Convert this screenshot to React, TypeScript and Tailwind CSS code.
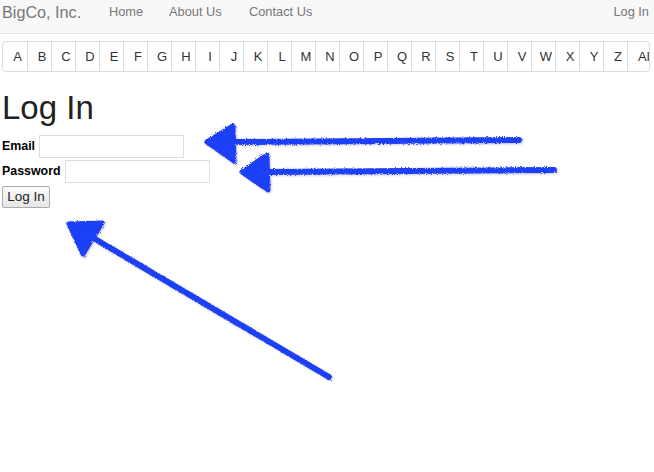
import React from "react";

const letters = "ABCDEFGHIJKLMNOPQRSTUVWXYZ".split("").concat("All");

function Arrows() {
  return (
    <svg
      className="pointer-events-none absolute left-0 top-0"
      width="654"
      height="472"
      viewBox="0 0 654 472"
    >
      <defs>
        <filter id="chalk" x="-10%" y="-10%" width="120%" height="120%">
          <feTurbulence type="fractalNoise" baseFrequency="1.1" numOctaves="2" result="noise" />
          <feDisplacementMap in="SourceGraphic" in2="noise" scale="3.5" result="rough" />
          <feGaussianBlur in="rough" stdDeviation="1.3" result="blur" />
          <feOffset in="blur" dx="0.5" dy="1" result="shadow" />
          <feColorMatrix
            in="shadow"
            type="matrix"
            values="0 0 0 0 0.2  0 0 0 0 0.2  0 0 0 0 0.3  0 0 0 0.4 0"
            result="shade"
          />
          <feMerge>
            <feMergeNode in="shade" />
            <feMergeNode in="rough" />
          </feMerge>
        </filter>
      </defs>
      <g filter="url(#chalk)" fill="#1e3ff6" stroke="#1e3ff6" strokeLinecap="round" strokeLinejoin="round">
        {/* email arrow */}
        <path d="M232 142 L519 140" strokeWidth="6" fill="none" />
        <path d="M207 142 L233 126 L234 161 Z" strokeWidth="5" />
        {/* password arrow */}
        <path d="M264 172 L554 170" strokeWidth="6" fill="none" />
        <path d="M242 172 L267 155 L268 190 Z" strokeWidth="5" />
        {/* button arrow */}
        <path d="M95 239 L329 377" strokeWidth="6" fill="none" />
        <path d="M69 224 L102 223 L83 254 Z" strokeWidth="5" />
      </g>
    </svg>
  );
}

export default function App() {
  return (
    <div
      className="relative h-[472px] w-[654px] overflow-hidden bg-white text-[#333]"
      style={{ fontFamily: '"Liberation Sans", Arial, sans-serif' }}
    >
      <nav className="flex h-[34px] items-start border-b border-[#e7e7e7] bg-[#f8f8f8] pl-[2px] pr-[5px] pt-[2px] text-[12.8px] text-[#777]">
        <span className="w-[107px] text-[16.2px] leading-[20px]">BigCo, Inc.</span>
        <span className="w-[60px] leading-[20px]">Home</span>
        <span className="w-[80px] leading-[20px]">About Us</span>
        <span className="leading-[20px]">Contact Us</span>
        <span className="ml-auto leading-[20px]">Log In</span>
      </nav>

      <div className="ml-[2px] mt-[7px] flex w-[648px] overflow-hidden rounded-[4px] border border-[#ddd]">
        {letters.map((l, i) => (
          <span
            key={l}
            className={`flex h-[29px] w-[24px] shrink-0 items-center overflow-hidden whitespace-nowrap text-[13px] text-[#333] ${
              i > 0 ? "border-l border-[#ddd]" : ""
            } ${l === "All" ? "justify-start pl-[10px]" : "justify-center pl-[5px]"}`}
          >
            {l}
          </span>
        ))}
      </div>

      <div className="px-[2px]">
        <h1 className="mt-[18px] text-[33px] leading-[36px] text-[#222]">Log In</h1>
        <form className="mt-[9px] flex flex-col gap-[2px] text-[12.4px]">
          <label className="flex items-center gap-[4px] font-bold text-black">
            Email
            <input className="h-[23px] w-[145px] border border-[#ddd] bg-white outline-none" />
          </label>
          <label className="flex items-center gap-[4px] font-bold text-black">
            Password
            <input
              type="password"
              className="h-[23px] w-[145px] border border-[#ddd] bg-white outline-none"
            />
          </label>
          <div className="mt-[1px]">
            <button
              type="button"
              className="h-[22px] w-[48px] rounded-[2px] border border-[#aaa] bg-gradient-to-b from-[#fafafa] to-[#e6e6e6] text-[13.5px] text-[#222]"
            >
              Log In
            </button>
          </div>
        </form>
      </div>

      <Arrows />
    </div>
  );
}
